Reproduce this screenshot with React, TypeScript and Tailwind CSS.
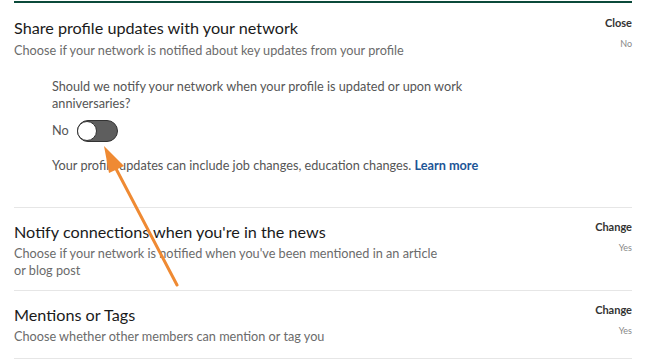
import React from 'react';

interface Setting { title: string; desc: string; action: string; value: string; }

const ROWS: Setting[] = [
  { title: "Notify connections when you're in the news", desc: "Choose if your network is notified when you've been mentioned in an article or blog post", action: 'Change', value: 'Yes' },
  { title: 'Mentions or Tags', desc: 'Choose whether other members can mention or tag you', action: 'Change', value: 'Yes' },
];

function Toggle() {
  return (
    <div className="w-[41px] h-[22px] rounded-full bg-[#5e5e5e] border-[1.5px] border-[#333] flex items-center">
      <div className="w-[20px] h-[20px] rounded-full bg-white border-[1.5px] border-[#333] -ml-[1px]" />
    </div>
  );
}

function Aside({ action, value }: { action: string; value: string }) {
  return (
    <div className="flex flex-col items-end shrink-0">
      <span className="text-[11px] font-bold text-[#333] leading-[14px]">{action}</span>
      <span className="text-[9px] text-[#888] leading-[12px] mt-[8px]">{value}</span>
    </div>
  );
}

export default function App() {
  return (
    <div className="relative w-[646px] h-[360px] bg-white overflow-hidden font-['Lato','Noto_Sans',sans-serif]">
      <div className="mx-[14px] border-t-[2px] border-[#0b4a3a] mt-[1px]">
        <div className="flex justify-between pt-[13px]">
          <div>
            <h2 className="text-[16.2px] leading-[24px] text-[#1a1a1a]">Share profile updates with your network</h2>
            <p className="text-[12.7px] leading-[18px] text-[#6b6b6b] mt-[1px]">Choose if your network is notified about key updates from your profile</p>
          </div>
          <Aside action="Close" value="No" />
        </div>
        <div className="pl-[38px] pt-[19px] pb-[33px]">
          <p className="text-[12.7px] leading-[17px] text-[#555] w-[414px]">Should we notify your network when your profile is updated or upon work anniversaries?</p>
          <div className="flex items-center gap-[8px] mt-[8px]">
            <span className="text-[12.7px] text-[#555]">No</span>
            <Toggle />
          </div>
          <p className="text-[12.7px] leading-[18px] text-[#555] mt-[14px]">
            Your profile updates can include job changes, education changes. <span className="font-bold text-[#1d5596]">Learn more</span>
          </p>
        </div>
        {ROWS.map((r, i) => (
          <div key={r.title} className={`border-t border-[#e6e6e6] flex justify-between pt-[12px] ${i === ROWS.length - 1 ? 'pb-[13px]' : 'pb-[11px]'}`}>
            <div className="w-[436px]">
              <h2 className="text-[16.2px] leading-[24px] text-[#1a1a1a]">{r.title}</h2>
              <p className="text-[12.7px] leading-[17px] text-[#6b6b6b] mt-[1px]">{r.desc}</p>
            </div>
            <Aside action={r.action} value={r.value} />
          </div>
        ))}
        <div className="border-t border-[#e6e6e6]" />
      </div>
      <svg className="absolute left-0 top-0 pointer-events-none" width="646" height="360">
        <line x1="177" y1="285" x2="113" y2="163" stroke="#ef8a33" strokeWidth="3" strokeLinecap="round" />
        <polygon points="104,146 124,166 109,173" fill="#ef8a33" />
      </svg>
    </div>
  );
}
